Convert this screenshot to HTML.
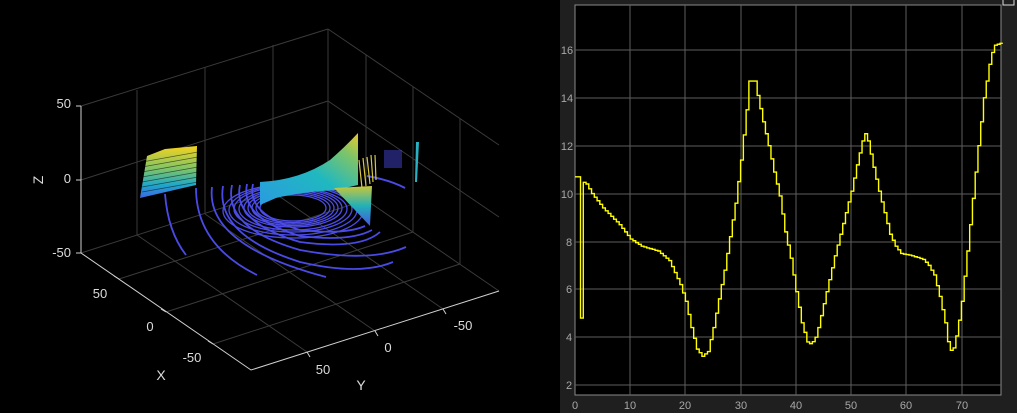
<!DOCTYPE html>
<html><head><meta charset="utf-8"><style>
html,body{margin:0;padding:0;background:#000;width:1017px;height:413px;overflow:hidden}
svg{display:block}
text{font-family:"Liberation Sans",sans-serif}
</style></head><body>
<svg width="1017" height="413" viewBox="0 0 1017 413" xmlns="http://www.w3.org/2000/svg">
<defs>
<linearGradient id="gw" x1="0" y1="0" x2="0" y2="1">
<stop offset="0" stop-color="#f5d21e"/><stop offset="0.45" stop-color="#7cc46a"/><stop offset="0.75" stop-color="#1fa8c8"/><stop offset="1" stop-color="#3d66e8"/></linearGradient>
<linearGradient id="gc" x1="0" y1="1" x2="1" y2="0">
<stop offset="0" stop-color="#2a9be0"/><stop offset="0.5" stop-color="#20b8c0"/><stop offset="0.8" stop-color="#7cc46a"/><stop offset="1" stop-color="#e8c82a"/></linearGradient>
<linearGradient id="gs" x1="0" y1="0" x2="0" y2="1">
<stop offset="0" stop-color="#c8c83a"/><stop offset="0.5" stop-color="#22b0b8"/><stop offset="1" stop-color="#4455e0"/></linearGradient>
</defs>
<rect width="1017" height="413" fill="#000"/>
<g stroke="#3a3a3a" stroke-width="1" fill="none">
<path d="M81,106 L328,29 M81,180 L328,101 M328,29 L328,174"/>
<path d="M137,90 L137,235 M205,67 L205,214 M273,45 L273,192"/>
<path d="M328,29 L499,145 M328,101 L499,217 M328,174 L499,291"/>
<path d="M366,55 L366,200 M413,87 L413,232 M460,119 L460,264"/>
<path d="M81,253 L328,174"/>
<path d="M137,235 L307,352 M205,214 L375,331 M273,192 L443,309"/>
<path d="M119,279 L366,200 M166,312 L413,232 M213,344 L460,264"/>
</g>
<g stroke="#d0d0d0" stroke-width="1" fill="none">
<path d="M81,106 L81,253 L251,370 L499,291"/>
<path d="M81,106 L76,106 M81,180 L76,180 M81,253 L76,253"/>
<path d="M119,279 L114,276 M166,312 L161,309 M213,344 L208,341"/>
<path d="M307,352 L310,357 M375,331 L378,336 M443,309 L446,314"/>
</g>
<g fill="#dcdcdc" font-size="13">
<text x="71" y="108" text-anchor="end">50</text>
<text x="71" y="183" text-anchor="end">0</text>
<text x="71" y="257" text-anchor="end">-50</text>
<text x="43" y="180" transform="rotate(-90 37 180)" font-size="14" text-anchor="middle" dx="-6" dy="6">Z</text>
<text x="100" y="298" text-anchor="middle">50</text>
<text x="150" y="331" text-anchor="middle">0</text>
<text x="192" y="362" text-anchor="middle">-50</text>
<text x="161" y="380" text-anchor="middle" font-size="14">X</text>
<text x="323" y="374" text-anchor="middle">50</text>
<text x="388" y="352" text-anchor="middle">0</text>
<text x="463" y="330" text-anchor="middle">-50</text>
<text x="361" y="390" text-anchor="middle" font-size="14">Y</text>
</g>
<g stroke="#4a4ae6" stroke-width="1.8" fill="none">
<path d="M165,194 Q168,232 186,255"/>
<path d="M196,188 Q196,245 257,275"/>
<path d="M212,187 Q205,245 326,277"/>
<path d="M223,186 Q215,235 300,262 Q360,276 393,262"/>
<path d="M232,185 Q223,228 300,250 Q370,263 406,247"/>
<path d="M240,185 Q232,222 300,242 Q360,250 380,232"/>
<path d="M247,184 Q240,218 300,236 Q350,242 372,230"/>
<path d="M253,184 Q246,214 300,230 Q345,235 365,226"/>
</g>
<g fill="none" stroke="#4c4ce8" stroke-width="1.3">
<ellipse cx="293" cy="208" rx="33" ry="13"/>
<ellipse cx="293" cy="208" rx="37" ry="14.5"/>
<ellipse cx="293" cy="208" rx="41" ry="16"/>
<ellipse cx="293" cy="208" rx="45" ry="17.5"/>
<ellipse cx="293" cy="208" rx="49" ry="19"/>
<ellipse cx="293" cy="209" rx="54" ry="21"/>
<ellipse cx="293" cy="209" rx="59" ry="23"/>
<ellipse cx="293" cy="210" rx="64" ry="25"/>
<ellipse cx="293" cy="211" rx="70" ry="27"/>
</g>
<path d="M367,176 Q390,180 405,188" stroke="#4a4ae6" stroke-width="2" fill="none"/>
<path d="M147,156 L165,149 L197,146 L196,185 L140,198 Z" fill="url(#gw)"/>
<g stroke="#000" stroke-width="0.8" opacity="0.55">
<path d="M142,162 L198,152 M142,167 L198,157 M142,172 L198,162 M142,177 L198,167 M142,182 L198,172 M142,187 L198,177 M142,192 L198,182"/>
</g>
<path d="M260,182 Q300,180 330,160 Q345,147 358,133 L358,185 L336,190 Q300,192 276,198 L260,205 Z" fill="url(#gc)"/>
<path d="M334,188 L372,186 L370,226 Z" fill="url(#gs)"/>
<g stroke="#d8c840" stroke-width="1.2"><path d="M359,160 L362,188 M363,158 L366,186 M367,157 L370,184 M371,155 L373,182 M375,155 L376,180"/></g>
<rect x="384" y="150" width="18" height="18" fill="#4a4ae6" opacity="0.45"/>
<path d="M416,142 L419,142 L417,182 L415,182 Z" fill="#2ab0c0"/>
<rect x="560" y="0" width="457" height="413" fill="#1f1f1f"/>
<rect x="575" y="5" width="426" height="390" fill="#000" stroke="#8a8a8a" stroke-width="1"/>
<g stroke="#5e5e5e" stroke-width="1">
<path d="M630,5V395M685,5V395M741,5V395M796,5V395M851,5V395M906,5V395M962,5V395"/>
<path d="M575,50H1001M575,98H1001M575,146H1001M575,194H1001M575,242H1001M575,289H1001M575,337H1001M575,385H1001"/>
</g>
<g fill="#a8a8a8" font-size="11" text-anchor="middle">
<text x="567" y="54">16</text><text x="567" y="102">14</text><text x="567" y="150">12</text><text x="567" y="198">10</text>
<text x="569" y="246">8</text><text x="569" y="293">6</text><text x="569" y="341">4</text><text x="569" y="389">2</text>
<text x="575" y="409">0</text><text x="630" y="409">10</text><text x="685" y="409">20</text><text x="741" y="409">30</text>
<text x="796" y="409">40</text><text x="851" y="409">50</text><text x="906" y="409">60</text><text x="962" y="409">70</text>
</g>
<rect x="1003" y="-1" width="11" height="6" fill="none" stroke="#ddd" stroke-width="1"/>
<g transform="translate(575,50) scale(5.52,-23.93) translate(0,-16)">
<path id="sig" fill="none" stroke="#ffff00" stroke-width="1.4" vector-effect="non-scaling-stroke" d=""/>
</g>
</svg>
<script>
var k=[[0,10.7],[2,10.4],[3,10],[5,9.4],[8,8.7],[10,8.1],[12,7.8],[15,7.6],[17,7.2],[18,6.7],[19,6.2],[20,5.5],[21,4.4],[22,3.5],[23,3.2],[24,3.4],[25,4.4],[26,5.6],[27,6.8],[28,8.2],[29,9.6],[30,11.4],[31,13.5],[31.5,14.7],[32.5,14.7],[33,14.1],[34,13],[35,12],[36,10.9],[37,9.9],[38,8.4],[39,7.3],[40,5.9],[41,4.6],[42,3.8],[42.7,3.7],[43.5,4],[44,4.4],[45,5.4],[46,6.4],[47,7.4],[48,8.3],[49,9.2],[50,10.1],[51,11.2],[52,12.2],[52.5,12.5],[53,12.2],[54,11.1],[55,10.1],[56,9.2],[57,8.3],[58,7.8],[59,7.5],[61,7.4],[63,7.25],[64,7],[65,6.6],[66,5.7],[67,4.6],[67.7,3.5],[68.3,3.4],[68.7,3.7],[69.3,4.4],[70,5.5],[71,7.6],[72,9.8],[73,12],[74,14],[75,15.4],[75.5,15.9],[76,16.2],[77.2,16.3]];
function f(t){for(var i=1;i<k.length;i++){if(t<=k[i][0]){var a=k[i-1],b=k[i];return a[1]+(b[1]-a[1])*(t-a[0])/(b[0]-a[0]);}}return 16.3;}
var d="M0,10.7 L1,10.7 L1,4.8 L1.5,4.8 L1.5,10.4";var st=0.5;
for(var t=1.5;t<77.2;t+=st){var v=f(t);d+=" L"+t+","+v.toFixed(2)+" L"+(t+st)+","+v.toFixed(2);}
document.getElementById("sig").setAttribute("d",d);
</script>
</body></html>
